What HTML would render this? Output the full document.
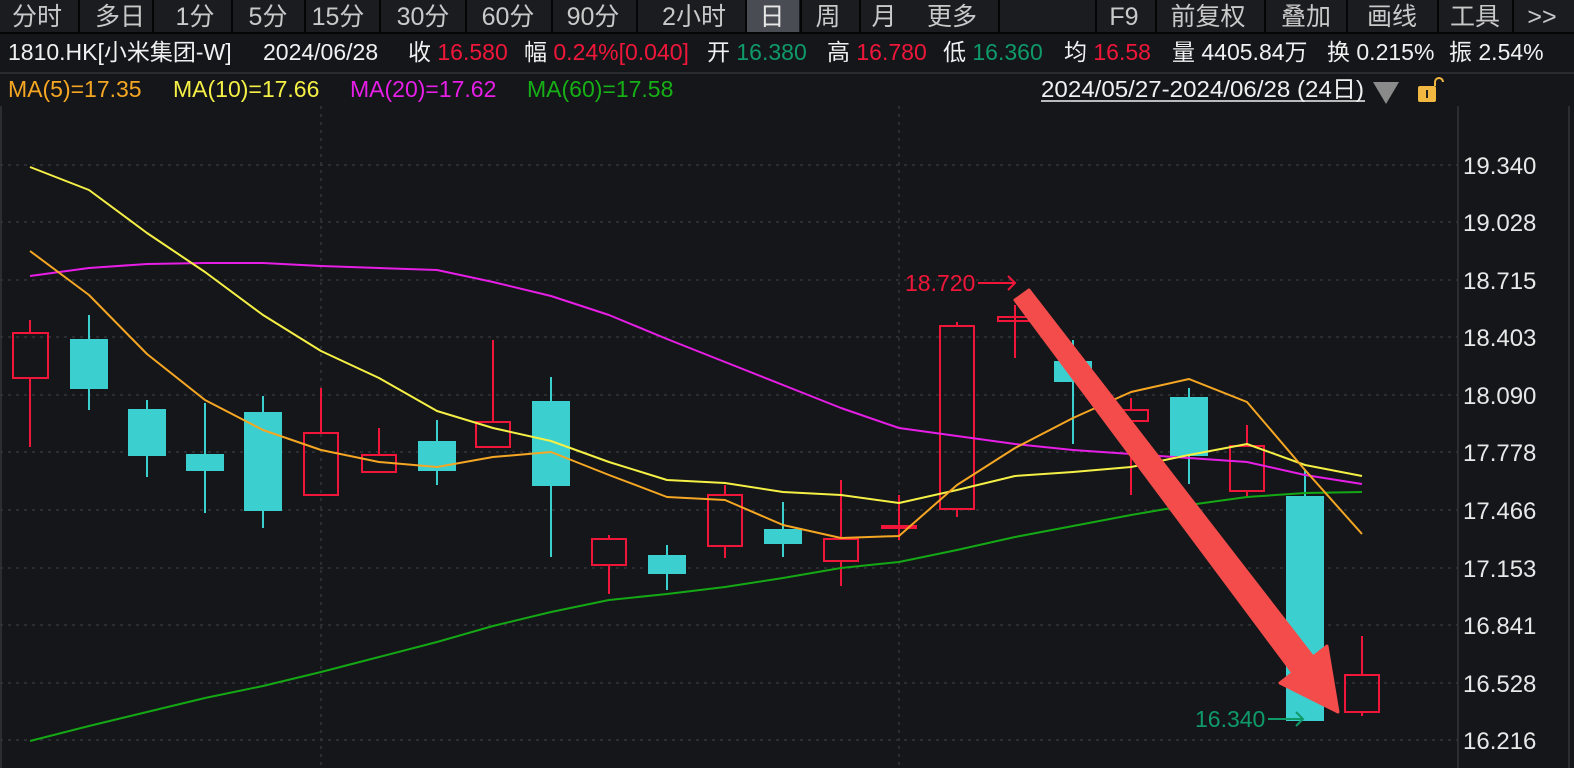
<!DOCTYPE html>
<html><head><meta charset="utf-8"><style>
html,body{margin:0;padding:0;background:#15161a;width:1574px;height:768px;overflow:hidden}
svg{display:block}
text{font-family:"Liberation Sans","Noto Sans CJK SC",sans-serif}
</style></head><body>
<svg width="1574" height="768" viewBox="0 0 1574 768" xmlns="http://www.w3.org/2000/svg">
<rect x="0" y="0" width="1574" height="768" fill="#15161a"/>
<!-- top tabs -->
<rect x="0" y="0" width="1574" height="33" fill="#1b1c20"/>
<rect x="747" y="0" width="52" height="33" fill="#4a4c54"/>
<g stroke="#050505" stroke-width="2">
<line x1="79" y1="0" x2="79" y2="33"/><line x1="153" y1="0" x2="153" y2="33"/><line x1="232" y1="0" x2="232" y2="33"/><line x1="305" y1="0" x2="305" y2="33"/><line x1="380" y1="0" x2="380" y2="33"/><line x1="466" y1="0" x2="466" y2="33"/><line x1="552" y1="0" x2="552" y2="33"/><line x1="637" y1="0" x2="637" y2="33"/><line x1="746" y1="0" x2="746" y2="33"/><line x1="801" y1="0" x2="801" y2="33"/><line x1="860" y1="0" x2="860" y2="33"/><line x1="999" y1="0" x2="999" y2="33"/><line x1="1096" y1="0" x2="1096" y2="33"/><line x1="1156" y1="0" x2="1156" y2="33"/><line x1="1265" y1="0" x2="1265" y2="33"/><line x1="1347" y1="0" x2="1347" y2="33"/><line x1="1438" y1="0" x2="1438" y2="33"/><line x1="1513" y1="0" x2="1513" y2="33"/>
<line x1="0" y1="33" x2="1574" y2="33"/>
</g>
<g fill="#c9c9c9" font-size="25" text-anchor="middle">
<text x="37" y="25">分时</text><text x="120" y="25">多日</text><text x="195" y="25">1分</text><text x="268" y="25">5分</text><text x="338" y="25">15分</text><text x="423" y="25">30分</text><text x="508" y="25">60分</text><text x="593" y="25">90分</text><text x="694" y="25">2小时</text><text x="772" y="25" fill="#e8e8e8">日</text><text x="828" y="25">周</text><text x="884" y="25">月</text><text x="952" y="25">更多</text><text x="1124" y="25">F9</text><text x="1208" y="25">前复权</text><text x="1306" y="25">叠加</text><text x="1392" y="25">画线</text><text x="1475" y="25">工具</text><text x="1542" y="25">&gt;&gt;</text>
</g>
<!-- info row -->
<g font-size="23" fill="#f0f0f0">
<text x="8" y="60">1810.HK[小米集团-W]</text>
<text x="263" y="60">2024/06/28</text>
<text x="408" y="60">收 <tspan fill="#f0163a">16.580</tspan></text>
<text x="524" y="60">幅 <tspan fill="#f0163a">0.24%[0.040]</tspan></text>
<text x="707" y="60">开 <tspan fill="#0f9a6a">16.380</tspan></text>
<text x="827" y="60">高 <tspan fill="#f0163a">16.780</tspan></text>
<text x="943" y="60">低 <tspan fill="#0f9a6a">16.360</tspan></text>
<text x="1064" y="60">均 <tspan fill="#f0163a">16.58</tspan></text>
<text x="1172" y="60">量 4405.84万</text>
<text x="1327" y="60">换 0.215%</text>
<text x="1449" y="60">振 2.54%</text>
</g>
<line x1="0" y1="73" x2="1574" y2="73" stroke="#2a2b30" stroke-width="2"/>
<!-- MA row -->
<g font-size="23">
<text x="8" y="97" fill="#f5a623">MA(5)=17.35</text>
<text x="173" y="97" fill="#f5f045">MA(10)=17.66</text>
<text x="350" y="97" fill="#e61ee6">MA(20)=17.62</text>
<text x="527" y="97" fill="#16b016">MA(60)=17.58</text>
<text x="1041" y="97" fill="#f0f0f0" textLength="323" lengthAdjust="spacingAndGlyphs">2024/05/27-2024/06/28 (24日)</text>
</g>
<line x1="1041" y1="101" x2="1365" y2="101" stroke="#f0f0f0" stroke-width="1.5"/>
<polygon points="1373,82 1399,82 1386,104" fill="#8a8a8a"/>
<rect x="1418" y="86" width="18" height="16" rx="2" fill="#f0b840"/>
<path d="M1435,86 v-4 a4,4 0 0 1 8,0" fill="none" stroke="#f0b840" stroke-width="2"/>
<rect x="1426" y="90" width="2" height="8" fill="#222"/>
<!-- axis lines -->
<line x1="1458" y1="106" x2="1458" y2="768" stroke="#2c2d32" stroke-width="2"/>
<line x1="1569" y1="106" x2="1569" y2="768" stroke="#2c2d32" stroke-width="2"/>
<line x1="1" y1="106" x2="1" y2="768" stroke="#2c2d32" stroke-width="2"/>
<!-- grid -->
<g stroke="#34353a" stroke-width="1.5" stroke-dasharray="3,5">
<line x1="0" y1="165" x2="1458" y2="165"/><line x1="0" y1="222" x2="1458" y2="222"/><line x1="0" y1="280" x2="1458" y2="280"/><line x1="0" y1="337" x2="1458" y2="337"/><line x1="0" y1="395" x2="1458" y2="395"/><line x1="0" y1="452" x2="1458" y2="452"/><line x1="0" y1="510" x2="1458" y2="510"/><line x1="0" y1="568" x2="1458" y2="568"/><line x1="0" y1="625" x2="1458" y2="625"/><line x1="0" y1="683" x2="1458" y2="683"/><line x1="0" y1="740" x2="1458" y2="740"/>
<line x1="321" y1="106" x2="321" y2="768"/><line x1="899" y1="106" x2="899" y2="768"/>
</g>
<g font-size="24" fill="#e8e8e8">
<text x="1463" y="174">19.340</text><text x="1463" y="231">19.028</text><text x="1463" y="289">18.715</text><text x="1463" y="346">18.403</text><text x="1463" y="404">18.090</text><text x="1463" y="461">17.778</text><text x="1463" y="519">17.466</text><text x="1463" y="577">17.153</text><text x="1463" y="634">16.841</text><text x="1463" y="692">16.528</text><text x="1463" y="749">16.216</text>
</g>
<!-- candles -->
<g stroke-width="2">
<g stroke="#f0163a" fill="none">
<line x1="30" y1="320" x2="30" y2="332"/><line x1="30" y1="378" x2="30" y2="447"/><rect x="13" y="333" width="35" height="45"/>
<line x1="321" y1="388" x2="321" y2="432"/><rect x="304" y="433" width="34" height="62"/>
<line x1="379" y1="428" x2="379" y2="455"/><rect x="362" y="455" width="34" height="17"/>
<line x1="493" y1="340" x2="493" y2="422"/><rect x="476" y="422" width="34" height="25"/>
<line x1="609" y1="535" x2="609" y2="539"/><line x1="609" y1="565" x2="609" y2="594"/><rect x="592" y="539" width="34" height="26"/>
<line x1="725" y1="485" x2="725" y2="495"/><line x1="725" y1="546" x2="725" y2="558"/><rect x="708" y="495" width="34" height="51"/>
<line x1="841" y1="480" x2="841" y2="539"/><line x1="841" y1="561" x2="841" y2="586"/><rect x="824" y="539" width="34" height="22"/>
<line x1="899" y1="495" x2="899" y2="540"/><rect x="882" y="526" width="34" height="2"/>
<line x1="957" y1="322" x2="957" y2="326"/><line x1="957" y1="509" x2="957" y2="517"/><rect x="940" y="326" width="34" height="183"/>
<line x1="1015" y1="305" x2="1015" y2="358"/><rect x="998" y="317" width="34" height="4"/>
<line x1="1131" y1="398" x2="1131" y2="410"/><line x1="1131" y1="421" x2="1131" y2="495"/><rect x="1114" y="410" width="34" height="11"/>
<line x1="1247" y1="425" x2="1247" y2="446"/><line x1="1247" y1="491" x2="1247" y2="498"/><rect x="1230" y="446" width="34" height="45"/>
<line x1="1362" y1="636" x2="1362" y2="675"/><line x1="1362" y1="712" x2="1362" y2="716"/><rect x="1345" y="675" width="34" height="37"/>
</g>
<g stroke="#3ccfcf" fill="#3ccfcf">
<line x1="89" y1="315" x2="89" y2="410"/><rect x="71" y="340" width="36" height="48"/>
<line x1="147" y1="400" x2="147" y2="477"/><rect x="129" y="410" width="36" height="45"/>
<line x1="205" y1="403" x2="205" y2="513"/><rect x="187" y="455" width="36" height="15"/>
<line x1="263" y1="396" x2="263" y2="528"/><rect x="245" y="413" width="36" height="97"/>
<line x1="437" y1="420" x2="437" y2="485"/><rect x="419" y="442" width="36" height="28"/>
<line x1="551" y1="377" x2="551" y2="557"/><rect x="533" y="402" width="36" height="83"/>
<line x1="667" y1="545" x2="667" y2="590"/><rect x="649" y="556" width="36" height="17"/>
<line x1="783" y1="502" x2="783" y2="557"/><rect x="765" y="530" width="36" height="13"/>
<line x1="1073" y1="340" x2="1073" y2="444"/><rect x="1055" y="362" width="36" height="19"/>
<line x1="1189" y1="388" x2="1189" y2="484"/><rect x="1171" y="398" width="36" height="57"/>
<line x1="1305" y1="470" x2="1305" y2="720"/><rect x="1287" y="497" width="36" height="223"/>
</g>
</g>
<!-- MA lines -->
<g fill="none" stroke-width="2" stroke-linejoin="round">
<polyline stroke="#14a814" points="30,741 89,726 147,712 205,698 263,686 321,672 379,657 437,642 493,626 551,612 609,600 667,594 725,587 783,578 841,568 899,562 957,550 1015,537 1073,526 1131,515 1189,505 1247,497 1305,493 1362,492"/>
<polyline stroke="#e61ee6" points="30,276 89,268 147,264 205,263 263,263 321,266 379,268 437,270 493,282 551,296 609,315 667,339 725,362 783,385 841,408 899,428 957,436 1015,444 1073,450 1131,454 1189,458 1247,462 1305,475 1362,484"/>
<polyline stroke="#f5f045" points="30,167 89,190 147,233 205,272 263,315 321,351 379,378 437,411 493,428 551,441 609,462 667,480 725,483 783,492 841,495 899,503 957,490 1015,476 1073,472 1131,467 1189,455 1247,444 1305,465 1362,476"/>
<polyline stroke="#f5a623" points="30,251 89,295 147,354 205,400 263,430 321,450 379,462 437,467 493,457 551,452 609,475 667,497 725,500 783,525 841,538 899,536 957,485 1015,448 1073,418 1131,392 1189,379 1247,402 1305,470 1362,534"/>
</g>
<!-- labels -->
<text x="905" y="291" font-size="23" fill="#f0163a">18.720</text>
<path d="M978,283 H1015 M1008,276 L1015,283 L1008,290" stroke="#f0163a" stroke-width="2" fill="none"/>
<text x="1195" y="727" font-size="23" fill="#0f9a6a">16.340</text>
<path d="M1268,719 H1303 M1296,712 L1303,719 L1296,726" stroke="#0f9a6a" stroke-width="2" fill="none"/>
<!-- big arrow -->
<polygon points="1029,290 1015,300 1293,673 1280,683 1338,712 1327,646 1313,657" fill="#f44c4a" stroke="#f44c4a" stroke-width="3" stroke-linejoin="round"/>
</svg>
</body></html>
